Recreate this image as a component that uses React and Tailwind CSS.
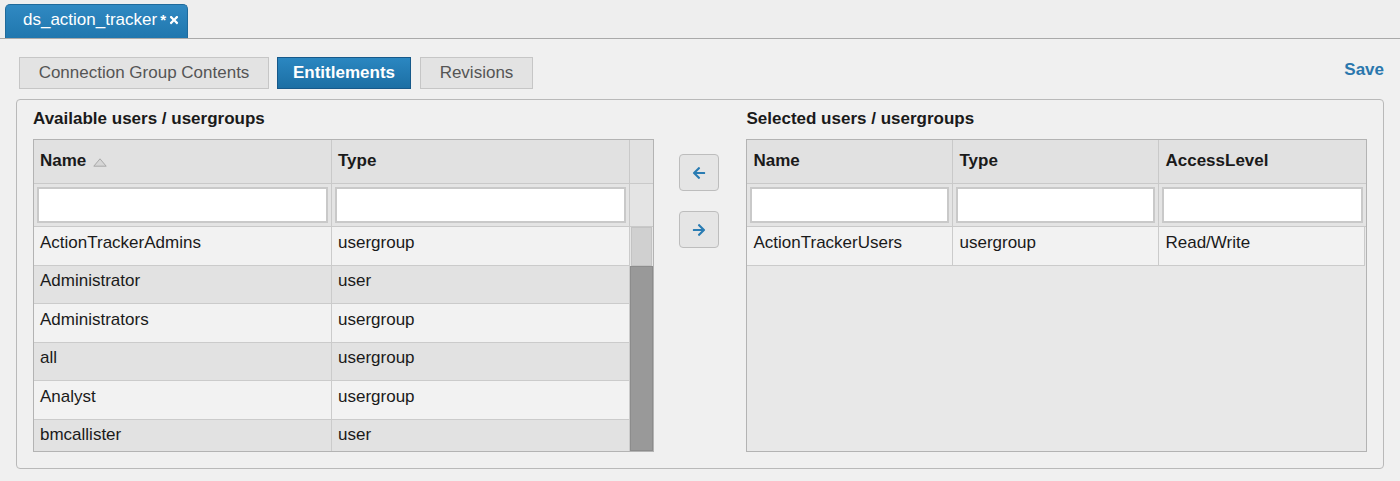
import { FaArrowLeft, FaArrowRight, FaTimes } from "react-icons/fa"

const available = [
  { name: "ActionTrackerAdmins", type: "usergroup" },
  { name: "Administrator", type: "user" },
  { name: "Administrators", type: "usergroup" },
  { name: "all", type: "usergroup" },
  { name: "Analyst", type: "usergroup" },
  { name: "bmcallister", type: "user" },
]

function SortUp() {
  return (
    <svg width="14" height="9" viewBox="0 0 14 9" className="ml-[7px] mt-[3px]">
      <polygon points="7,0.8 13.2,8.2 0.8,8.2" fill="#d6d6d6" stroke="#a9a9a9" strokeWidth="1" />
    </svg>
  )
}

function FilterInput() {
  return (
    <div className="h-full p-[3px]">
      <div className="h-full bg-white border-2 border-[#c9c9c9]" />
    </div>
  )
}

function ArrowButton({ children }) {
  return (
    <button
      type="button"
      className="w-[40px] h-[37px] flex items-center justify-center rounded-[4px] bg-[#e5e5e5] border border-[#bdbdbd] text-[#2a7cb3]"
    >
      {children}
    </button>
  )
}

export default function App() {
  return (
    <div className="w-[1400px] h-[481px] bg-[#f0f0f0] text-[#1a1a1a] font-['Liberation_Sans',Arial,sans-serif] overflow-hidden">
      {/* Document tab bar */}
      <div className="h-[39px] bg-[#eeeeee] border-b border-[#a9a9a9] pl-[5px] pt-[4px]">
        <div className="w-[183px] h-[34px] rounded-t-[5px] bg-gradient-to-b from-[#3089c2] to-[#2077ae] border border-b-0 border-[#1f6a9b] flex items-center pl-[17px] pb-[3px] text-white text-[17px]">
          <span>ds_action_tracker</span>
          <span className="ml-[3px] text-[15px] font-bold">*</span>
          <FaTimes className="ml-[2px] w-[12px] h-[12px]" />
        </div>
      </div>

      <div className="px-[16px]">
        {/* Section buttons + save */}
        <div className="mt-[18px] flex items-center justify-between">
          <div className="flex items-center pl-[3px] gap-[8px]">
            <button
              type="button"
              className="h-[32px] w-[250px] bg-[#e3e3e3] border border-[#c6c6c6] text-[#555] text-[17px]"
            >
              Connection Group Contents
            </button>
            <button
              type="button"
              className="h-[32px] w-[134px] bg-gradient-to-b from-[#2b87c1] to-[#1c6fa4] border border-[#17598a] text-white text-[17px] font-bold"
            >
              Entitlements
            </button>
            <button
              type="button"
              className="h-[32px] w-[113px] ml-[1px] bg-[#e3e3e3] border border-[#c6c6c6] text-[#555] text-[17px]"
            >
              Revisions
            </button>
          </div>
          <button type="button" className="mb-[6px] text-[#2a77ad] font-bold text-[17px]">
            Save
          </button>
        </div>

        {/* Entitlements panel */}
        <div className="mt-[10px] h-[370px] border border-[#b9b9b9] rounded-[4px] pl-[16px] pr-[16px] flex">
          {/* Available */}
          <div className="w-[621px] flex flex-col">
            <div className="h-[39px] flex items-center pb-[2px] font-bold text-[17px]">
              Available users / usergroups
            </div>
            <div className="h-[313px] border border-[#b3b3b3] flex flex-col bg-[#f0f0f0]">
              <div className="h-[44px] shrink-0 flex bg-[#e1e1e1] border-b border-[#c9c9c9] font-bold text-[17px]">
                <div className="w-[298px] border-r border-[#c9c9c9] flex items-center pl-[6px] pb-[2px]">
                  Name
                  <SortUp />
                </div>
                <div className="w-[298px] border-r border-[#c9c9c9] flex items-center pl-[6px] pb-[2px]">Type</div>
                <div className="flex-1" />
              </div>
              <div className="h-[43px] shrink-0 flex bg-[#e4e4e4] border-b border-[#c9c9c9]">
                <div className="w-[298px] border-r border-[#c9c9c9]">
                  <FilterInput />
                </div>
                <div className="w-[298px] border-r border-[#c9c9c9]">
                  <FilterInput />
                </div>
                <div className="flex-1" />
              </div>
              <div className="flex-1 flex overflow-hidden">
                <div className="w-[596px]">
                  {available.map((row, i) => (
                    <div
                      key={row.name}
                      className={
                        "h-[38.5px] flex border-b border-[#cbcbcb] text-[17px] " +
                        (i % 2 === 0 ? "bg-[#f2f2f2]" : "bg-[#e2e2e2]")
                      }
                    >
                      <div className="w-[298px] border-r border-[#cbcbcb] flex items-center pl-[6px] pb-[7px]">{row.name}</div>
                      <div className="w-[298px] border-r border-[#cbcbcb] flex items-center pl-[6px] pb-[7px]">{row.type}</div>
                    </div>
                  ))}
                </div>
                {/* Scrollbar */}
                <div className="flex-1 flex flex-col bg-[#e6e6e6]">
                  <div className="h-[39px] mx-[1px] bg-[#d0d0d0] border border-[#c3c3c3]" />
                  <div className="flex-1 bg-[#999999] border border-[#8c8c8c]" />
                </div>
              </div>
            </div>
          </div>

          {/* Move buttons */}
          <div className="w-[93px] flex flex-col items-center pt-[54px] gap-[20px] pr-[3px]">
            <ArrowButton>
              <FaArrowLeft className="w-[14px] h-[14px]" />
            </ArrowButton>
            <ArrowButton>
              <FaArrowRight className="w-[14px] h-[14px]" />
            </ArrowButton>
          </div>

          {/* Selected */}
          <div className="w-[621px] flex flex-col">
            <div className="h-[39px] flex items-center pb-[2px] font-bold text-[17px]">
              Selected users / usergroups
            </div>
            <div className="h-[313px] border border-[#b3b3b3] flex flex-col bg-[#e8e8e8]">
              <div className="h-[44px] shrink-0 flex bg-[#e1e1e1] border-b border-[#c9c9c9] font-bold text-[17px]">
                <div className="w-[206px] border-r border-[#c9c9c9] flex items-center pl-[6px] pb-[2px]">Name</div>
                <div className="w-[206px] border-r border-[#c9c9c9] flex items-center pl-[6px] pb-[2px]">Type</div>
                <div className="flex-1 flex items-center pl-[6px] pb-[2px]">AccessLevel</div>
              </div>
              <div className="h-[43px] shrink-0 flex bg-[#e4e4e4] border-b border-[#c9c9c9]">
                <div className="w-[206px] border-r border-[#c9c9c9]">
                  <FilterInput />
                </div>
                <div className="w-[206px] border-r border-[#c9c9c9]">
                  <FilterInput />
                </div>
                <div className="flex-1">
                  <FilterInput />
                </div>
              </div>
              <div className="h-[38.5px] flex bg-[#f2f2f2] border-b border-[#cbcbcb] text-[17px] mr-[1px]">
                <div className="w-[206px] border-r border-[#cbcbcb] flex items-center pl-[6px] pb-[7px]">ActionTrackerUsers</div>
                <div className="w-[206px] border-r border-[#cbcbcb] flex items-center pl-[6px] pb-[7px]">usergroup</div>
                <div className="flex-1 border-r border-[#cbcbcb] flex items-center pl-[6px] pb-[7px]">Read/Write</div>
              </div>
            </div>
          </div>
        </div>
      </div>
    </div>
  )
}
